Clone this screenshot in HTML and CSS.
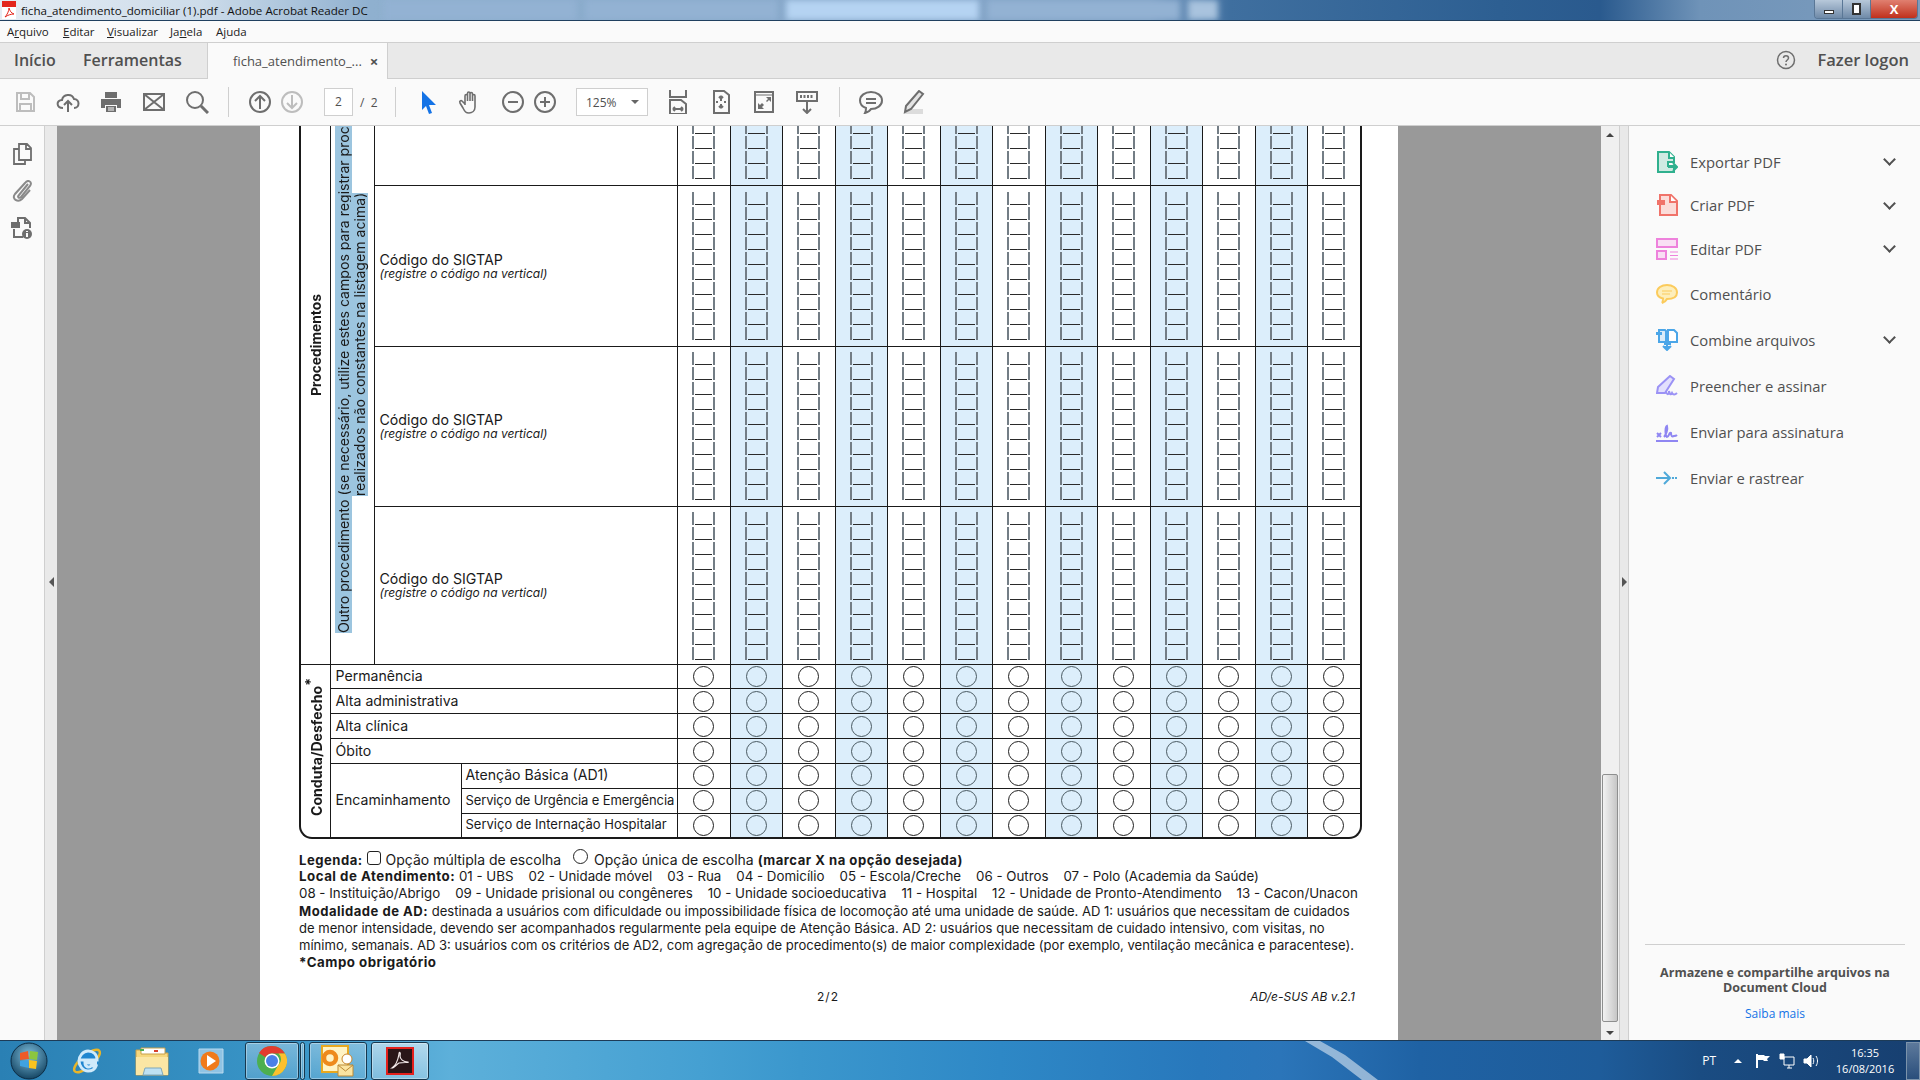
FILE: index.html
```html
<!DOCTYPE html>
<html lang="pt">
<head>
    <meta charset="UTF-8">
    <title>ficha_atendimento_domiciliar (1).pdf - Adobe Acrobat Reader DC</title>
    <link rel="stylesheet" href="styles.css">
</head>
<body>
<!-- Window title -->
<header class="titlebar">
    <svg class="pdf-icon" width="14" height="18" viewBox="0 0 14 18"><path d="M0 0h14v18H0z" fill="#fff"/><path d="M0 0h14v6H0z" fill="#e3261c"/><path d="M3 16c2-2 4-6 4-9 1 3 2 5 5 6-3 0-6 1-9 3z" fill="none" stroke="#e3261c"/></svg>
    <span class="titlebar-text">ficha_atendimento_domiciliar (1).pdf - Adobe Acrobat Reader DC</span>
    <div class="blur-tabs">
        <i class="blur-tab"></i><i class="blur-tab"></i><i class="blur-tab bright"></i><i class="blur-tab"></i><i class="blur-tab small"></i>
    </div>
    <div class="win-buttons">
        <span class="win-btn win-min"><i></i></span>
        <span class="win-btn win-max"><i></i></span>
        <span class="win-btn win-close">X</span>
    </div>
</header>

<nav class="menubar">
    <span>A<u>r</u>quivo</span><span><u>E</u>ditar</span><span><u>V</u>isualizar</span><span>Ja<u>n</u>ela</span><span>A<u>j</u>uda</span>
</nav>

<div class="tabbar">
    <span class="tab-link first">Início</span>
    <span class="tab-link">Ferramentas</span>
    <div class="doc-tab"><span>ficha_atendimento_...</span><b>×</b></div>
    <svg class="help-icon" width="20" height="20" viewBox="0 0 20 20"><circle cx="10" cy="10" r="8.5" fill="none" stroke="#6e6e6e" stroke-width="1.5"/><path d="M7.5 8c0-3 5-3 5 0 0 2-2.500 2-2.500 4" fill="none" stroke="#6e6e6e" stroke-width="1.500"/><circle cx="10" cy="14.500" r="1" fill="#6e6e6e"/></svg>
    <span class="logon">Fazer logon</span>
</div>

<div class="toolbar">
    <div class="tool-group g-file">
        <svg class="ico" viewBox="0 0 24 24" fill="none" stroke="#bdbdbd" stroke-width="2"><path d="M4 3h13l4 4v14H4zM8 3v6h8V3M7 21v-7h11v7"/></svg>
        <svg class="ico" viewBox="0 0 24 24" fill="none" stroke="#6e6e6e" stroke-width="2"><path d="M7 18c-7 0-7-8-1-8 1-6 10-7 12-1 6 0 6 9 0 9M12 22V11M8 15l4-4 4 4"/></svg>
        <svg class="ico" viewBox="0 0 24 24" fill="#6e6e6e"><path d="M6 2h12v6H6zM2 9h20v9h-4v-3H6v3H2zM7 16h10v6H7z"/><path d="M9 18h6M9 20h6" stroke="#fafafa"/></svg>
        <svg class="ico" viewBox="0 0 24 24" fill="none" stroke="#6e6e6e" stroke-width="2"><path d="M2 4h20v16H2zM2 4l20 16M22 4L2 20"/></svg>
        <svg class="ico" viewBox="0 0 24 24" fill="none" stroke="#6e6e6e" stroke-width="2"><circle cx="10" cy="10" r="8"/><path d="M16 16l7 7" stroke-width="3"/></svg>
    </div>
    <i class="tool-sep"></i>
    <div class="tool-group g-nav">
        <svg class="ico" viewBox="0 0 24 24" fill="none" stroke="#6e6e6e" stroke-width="2"><circle cx="12" cy="12" r="10"/><path d="M12 19V6M7 11l5-5 5 5"/></svg>
        <svg class="ico" viewBox="0 0 24 24" fill="none" stroke="#bdbdbd" stroke-width="2"><circle cx="12" cy="12" r="10"/><path d="M12 5v13M7 13l5 5 5-5"/></svg>
    </div>
    <span class="page-input">2</span>
    <span class="page-total">/ &nbsp;2</span>
    <i class="tool-sep sep-b"></i>
    <div class="tool-group g-hand">
        <svg class="ico" viewBox="0 0 24 24" fill="#1473e6"><path d="M6 1l14 14h-7l3 8-3 1-3-8-4 4z"/></svg>
        <svg class="ico" viewBox="0 0 24 24" fill="none" stroke="#6e6e6e" stroke-width="1.600"><path d="M7 15V6c0-2 2.500-2 2.500 0v5M9.500 11V3.500c0-2 2.500-2 2.500 0V11M12 11V4c0-2 2.500-2 2.500 0v7M14.500 11V6c0-2 2.500-2 2.500 0v11c0 4-3 6-6 6s-4-1-6-5l-3-5c-1-2 1-3 2-2l3 3"/></svg>
    </div>
    <div class="tool-group g-zoom">
        <svg class="ico" viewBox="0 0 24 24" fill="none" stroke="#6e6e6e" stroke-width="2"><circle cx="12" cy="12" r="10"/><path d="M7 12h10"/></svg>
        <svg class="ico" viewBox="0 0 24 24" fill="none" stroke="#6e6e6e" stroke-width="2"><circle cx="12" cy="12" r="10"/><path d="M7 12h10M12 7v10"/></svg>
    </div>
    <div class="zoom-select"><span>125%</span><i></i></div>
    <div class="tool-group g-fit">
        <svg class="ico" viewBox="0 0 24 24" fill="none" stroke="#6e6e6e" stroke-width="2"><path d="M4 0v7h16V0M4 10h11l5 4v10H4zM7 19h10M7 19l2-2M7 19l2 2M17 19l-2-2M17 19l-2 2"/></svg>
        <svg class="ico" viewBox="0 0 24 24" fill="none" stroke="#6e6e6e" stroke-width="2"><path d="M5 1h10l5 4v18H5zM12 6v5M12 6l-2 2M12 6l2 2M12 18v-4M12 18l-2-2M12 18l2-2M9 12H7M15 12h2"/></svg>
        <svg class="ico" viewBox="0 0 24 24" fill="none" stroke="#6e6e6e" stroke-width="2"><path d="M3 2h18v20H3z"/><path d="M3 5h18" stroke-width="1"/><path d="M14 7h5v5l-2-2-2 2-1-1 2-2zM6 19v-6l2 2 2-2 2 2-2 2 2 2z" fill="#6e6e6e" stroke="none"/></svg>
        <svg class="ico" viewBox="0 0 24 24" fill="none" stroke="#6e6e6e" stroke-width="2"><path d="M2 2h20v9H2z"/><path d="M5 6.500h14" stroke-width="3" stroke-dasharray="2 1.500"/><path d="M12 12v11M8 19l4 4 4-4"/></svg>
    </div>
    <i class="tool-sep sep-c"></i>
    <div class="tool-group g-note">
        <svg class="ico" viewBox="0 0 24 24" fill="none" stroke="#6e6e6e" stroke-width="2"><path d="M12 2c6 0 11 3.500 11 8.500S18 19 12 19c-1 2-3 3-6 4 1-2 1-3 1-5-4-1.500-6-4-6-7.500C1 5.500 6 2 12 2z"/><path d="M7 9h10M7 13h10"/></svg>
        <svg class="ico" viewBox="0 0 24 24"><path d="M10 19h12v5H2z" fill="#dcdcdc"/><path d="M18 1l4 3-12 15-6 3 1-6z" fill="#e4e4e4" stroke="#6e6e6e" stroke-width="2"/></svg>
    </div>
</div>

<main class="workspace">
    <aside class="rail">
        <svg class="rail-ico" viewBox="0 0 22 22" fill="none" stroke="#6e6e6e" stroke-width="1.800"><path d="M8 1h8l4 4v12H8zM15 1v5h5M8 6H3v15h11v-4"/></svg>
        <svg class="rail-ico" viewBox="0 0 22 22" fill="none" stroke="#8a8a8a" stroke-width="2"><path d="M17 4l-9 11c-2 2 0 4 2 2l9-11c3-4-2-7-5-3L4 14c-4 5 3 9 7 5l8-9"/></svg>
        <svg class="rail-ico" viewBox="0 0 22 22" fill="none" stroke="#6e6e6e" stroke-width="2"><path d="M7 6V1h7l5 5v5M14 1v5h5M3 12v8h9"/><path d="M1 6h7v4H1z" fill="#6e6e6e"/><circle cx="16" cy="17" r="5" fill="#6e6e6e" stroke="none"/><path d="M16 14v1M16 16v4" stroke="#fafafa"/></svg>
    </aside>
    <div class="strip"><i class="arrow-left"></i></div>

    <section class="viewer">
        <article class="page">
            <div class="form-frame">
                <table class="form">
                    <colgroup>
                        <col class="col-a"><col class="col-b"><col class="col-c"><col class="col-d">
                        <col class="wide"><col class="narrow"><col class="wide"><col class="narrow"><col class="wide"><col class="narrow"><col class="wide"><col class="narrow"><col class="wide"><col class="narrow"><col class="wide"><col class="narrow"><col class="wide">
                    </colgroup>
                    <tr class="combs first-combs">
                        <td rowspan="4" class="side"><div class="side-text proc">Procedimentos</div></td>
                        <td rowspan="4" class="side">
                            <div class="side-text outro">
                                <div class="outro-a"><span>Outro procedimento (se necessário, utilize estes campos para registrar procedimentos</span></div>
                                <div class="outro-b"><span>realizados não constantes na listagem acima)</span></div>
                            </div>
                        </td>
                        <td colspan="2">&nbsp;</td>
                        <td></td><td></td><td></td><td></td><td></td><td></td><td></td><td></td><td></td><td></td><td></td><td></td><td></td>
                    </tr>
                    <tr class="combs second-combs">
                        <td colspan="2" class="sigtap"><p>Código do SIGTAP</p><em>(registre o código na vertical)</em></td>
                        <td></td><td></td><td></td><td></td><td></td><td></td><td></td><td></td><td></td><td></td><td></td><td></td><td></td>
                    </tr>
                    <tr class="combs third-combs">
                        <td colspan="2" class="sigtap"><p>Código do SIGTAP</p><em>(registre o código na vertical)</em></td>
                        <td></td><td></td><td></td><td></td><td></td><td></td><td></td><td></td><td></td><td></td><td></td><td></td><td></td>
                    </tr>
                    <tr class="combs fourth-combs">
                        <td colspan="2" class="sigtap"><p>Código do SIGTAP</p><em>(registre o código na vertical)</em></td>
                        <td></td><td></td><td></td><td></td><td></td><td></td><td></td><td></td><td></td><td></td><td></td><td></td><td></td>
                    </tr>
                    <tr class="radios short">
                        <td rowspan="7" class="side end"><div class="side-text conduta">Conduta/Desfecho<sup>*</sup></div></td>
                        <td colspan="3" class="label">Permanência</td>
                        <td></td><td></td><td></td><td></td><td></td><td></td><td></td><td></td><td></td><td></td><td></td><td></td><td></td>
                    </tr>
                    <tr class="radios">
                        <td colspan="3" class="label">Alta administrativa</td>
                        <td></td><td></td><td></td><td></td><td></td><td></td><td></td><td></td><td></td><td></td><td></td><td></td><td></td>
                    </tr>
                    <tr class="radios">
                        <td colspan="3" class="label">Alta clínica</td>
                        <td></td><td></td><td></td><td></td><td></td><td></td><td></td><td></td><td></td><td></td><td></td><td></td><td></td>
                    </tr>
                    <tr class="radios">
                        <td colspan="3" class="label">Óbito</td>
                        <td></td><td></td><td></td><td></td><td></td><td></td><td></td><td></td><td></td><td></td><td></td><td></td><td></td>
                    </tr>
                    <tr class="radios short">
                        <td colspan="2" rowspan="3" class="label end">Encaminhamento</td>
                        <td class="label sub">Atenção Básica (AD1)</td>
                        <td></td><td></td><td></td><td></td><td></td><td></td><td></td><td></td><td></td><td></td><td></td><td></td><td></td>
                    </tr>
                    <tr class="radios">
                        <td class="label sub tight">Serviço de Urgência e Emergência</td>
                        <td></td><td></td><td></td><td></td><td></td><td></td><td></td><td></td><td></td><td></td><td></td><td></td><td></td>
                    </tr>
                    <tr class="radios short">
                        <td class="label sub small">Serviço de Internação Hospitalar</td>
                        <td></td><td></td><td></td><td></td><td></td><td></td><td></td><td></td><td></td><td></td><td></td><td></td><td></td>
                    </tr>
                </table>
            </div>

            <div class="legend">
                <p class="lead"><b>Legenda:</b> <i class="box"></i> Opção múltipla de escolha <i class="ring"></i> Opção única de escolha <b>(marcar X na opção desejada)</b></p>
                <p><b>Local de Atendimento:</b> 01 - UBS    02 - Unidade móvel    03 - Rua    04 - Domicílio    05 - Escola/Creche    06 - Outros    07 - Polo (Academia da Saúde)</p>
                <p>08 - Instituição/Abrigo    09 - Unidade prisional ou congêneres    10 - Unidade socioeducativa    11 - Hospital    12 - Unidade de Pronto-Atendimento    13 - Cacon/Unacon</p>
                <p class="prose"><b>Modalidade de AD:</b> destinada a usuários com dificuldade ou impossibilidade física de locomoção até uma unidade de saúde. AD 1: usuários que necessitam de cuidados</p>
                <p class="prose">de menor intensidade, devendo ser acompanhados regularmente pela equipe de Atenção Básica. AD 2: usuários que necessitam de cuidado intensivo, com visitas, no</p>
                <p class="prose">mínimo, semanais. AD 3: usuários com os critérios de AD2, com agregação de procedimento(s) de maior complexidade (por exemplo, ventilação mecânica e paracentese).</p>
                <p><b>*Campo obrigatório</b></p>
            </div>
            <div class="page-foot"><span class="page-no">2/2</span><em>AD/e-SUS AB v.2.1</em></div>
        </article>
    </section>

    <div class="scrollbar">
        <i class="sb-up"></i>
        <div class="sb-track"><div class="sb-thumb"></div></div>
        <i class="sb-down"></i>
    </div>
    <div class="strip strip-right"><i class="arrow-right"></i></div>

    <!-- Tools panel -->
    <aside class="panel">
        <ul class="tools">
            <li><svg class="tool-ico" viewBox="0 0 22 22"><path d="M2 1h11l5 5v5h-6v4h6v6H2z" fill="#cfeae2" stroke="#2fb08e" stroke-width="2"/><path d="M13 1v6h6" fill="#fff" stroke="#2fb08e" stroke-width="2"/><path d="M12 16h8M17 12l4 4-4 4" fill="none" stroke="#2fb08e" stroke-width="2"/></svg><span>Exportar PDF</span><i class="chev"></i></li>
            <li><svg class="tool-ico" viewBox="0 0 22 22"><path d="M4 1h11l6 6v14H4z" fill="#fbdcd9" stroke="#f0736a" stroke-width="2"/><path d="M14 1v7h7" fill="#fff" stroke="#f0736a" stroke-width="2"/><path d="M1 6h8v5H1z" fill="#f0736a"/></svg><span>Criar PDF</span><i class="chev"></i></li>
            <li><svg class="tool-ico" viewBox="0 0 22 22" stroke="#ee82dc" stroke-width="2"><path d="M1 1h20v8H1z" fill="#f9dff4"/><path d="M1 13h9v8H1z" fill="#f9dff4"/><path d="M14 14h8M14 17.500h8M14 21h8" stroke-width="1.200"/></svg><span>Editar PDF</span><i class="chev"></i></li>
            <li><svg class="tool-ico" viewBox="0 0 22 22"><path d="M11 2c5.500 0 10 3 10 7.500S16.500 16 11 16c-1 2-2 3-5 4 1-1 1-3 1-4.500C3 14.500 1 12 1 9.500 1 5 5.500 2 11 2z" fill="#fdeebb" stroke="#fbcb5c" stroke-width="2"/><path d="M6 8h10M6 11h8" stroke="#fbcb5c"/></svg><span>Comentário</span></li>
            <li><svg class="tool-ico" viewBox="0 0 22 22"><path d="M3 1h6l1 1v11H3z" fill="#d8ebf9" stroke="#4ba6e8" stroke-width="2"/><path d="M12 1h6l3 3v9h-9z" fill="#fff" stroke="#4ba6e8" stroke-width="2"/><path d="M0 3h6v3H0z" fill="#4ba6e8"/><path d="M8 15h6v-3M11 13v8M7 17l4 4 4-4" fill="#4ba6e8" stroke="#4ba6e8" stroke-width="2"/></svg><span>Combine arquivos</span><i class="chev"></i></li>
            <li><svg class="tool-ico" viewBox="0 0 22 22" fill="none" stroke="#9b92f5" stroke-width="2"><path d="M14 1l4 3-9 14H1l1-6z" fill="#e3e0fd"/><path d="M10 17c1 3 3 3 3-1 1 4 2 4 3 2 1 2 3 2 5 0"/></svg><span>Preencher e assinar</span></li>
            <li><svg class="tool-ico" viewBox="0 0 22 22" fill="none" stroke="#8f86f2" stroke-width="2"><path d="M1 12l4 4M5 12l-4 4M8 16c2-2 4-8 3-11-2 1-2 9 0 11 2 0 2-5 4-4 0 3 1 4 3 3 1 0 2 0 3-1"/><path d="M0 20h22"/></svg><span>Enviar para assinatura</span></li>
            <li><svg class="tool-ico" viewBox="0 0 22 22" fill="none" stroke="#4fa9d9" stroke-width="2"><path d="M0 11h13M8 5l6 6-6 6"/><path d="M16 11h6" stroke-dasharray="2 1"/></svg><span>Enviar e rastrear</span></li>
        </ul>
        <div class="cloud">
            <h4>Armazene e compartilhe arquivos na Document Cloud</h4>
            <a href="#">Saiba mais</a>
        </div>
    </aside>
</main>

<footer class="taskbar">
    <div class="task orb">
        <svg width="38" height="38" viewBox="0 0 38 38"><defs><radialGradient id="orb" cx=".5" cy=".35" r=".7"><stop offset="0" stop-color="#7fc0df"/><stop offset="1" stop-color="#0d3c5a"/></radialGradient></defs><circle cx="19" cy="19" r="18" fill="url(#orb)" stroke="#0c2c44"/><path d="M10 11l8-2 1 8-9 1z" fill="#ef5a28"/><path d="M20 9l8 1-1 8-8-1z" fill="#8cc63f"/><path d="M10 19l8-1 1 8-9-2z" fill="#3fa2e0"/><path d="M19 18l8 1-1 8-7-1z" fill="#fcc31e"/></svg>
    </div>
    <div class="task pin">
        <svg width="34" height="34" viewBox="0 0 34 34"><ellipse cx="16" cy="17" rx="16" ry="6" transform="rotate(-40 16 17)" fill="none" stroke="#e9b528" stroke-width="2.500"/><circle cx="17" cy="17" r="10.500" fill="#1f86d0"/><path d="M8 16h18c0-6-4-9-9-9s-9 5-9 10 4 10 9 10c4 0 7-2 8-5h-5c-2 2-6 1-6-3h12" fill="none" stroke="#cfeafa" stroke-width="3"/></svg>
    </div>
    <div class="task pin">
        <svg width="34" height="30" viewBox="0 0 34 30"><path d="M1 4h12l2 3h18v22H1z" fill="#f6d77e" stroke="#c7a04a"/><path d="M6 2h24v6H6z" fill="#fff" stroke="#c7a04a"/><path d="M5 3h4v2H5z" fill="#4cae4f"/><path d="M19 4h4v2h-4z" fill="#d8402e"/><path d="M1 11h32v18H1z" fill="#fbe6a4"/><path d="M10 22h16l2 7H8z" fill="#bfe1f2" stroke="#7fa8bb"/></svg>
    </div>
    <div class="task pin">
        <svg width="30" height="28" viewBox="0 0 30 28"><path d="M2 2h24v24H2z" fill="#8fc3e4" stroke="#b9daef"/><circle cx="13" cy="14" r="9.500" fill="#f07a1b"/><path d="M10 8l9 6-9 6z" fill="#fff"/></svg>
    </div>
    <div class="task open chrome">
        <svg width="30" height="30" viewBox="0 0 30 30"><circle cx="15" cy="15" r="15" fill="#4caf50"/><path d="M15 0a15 15 0 0 1 13 7.500H15a7.500 7.500 0 0 0-6.500 3.750L2 7a15 15 0 0 1 13-7z" fill="#e33b2e"/><path d="M28 7.500A15 15 0 0 1 15 30l6.500-11.250a7.500 7.500 0 0 0 0-11.250z" fill="#fbc02d"/><circle cx="15" cy="15" r="7.500" fill="#fff"/><circle cx="15" cy="15" r="6" fill="#4a80e8"/></svg>
    </div>
    <div class="task open sliver"></div>
    <div class="task open">
        <svg width="34" height="32" viewBox="0 0 34 32"><path d="M1 1h26v26H1z" fill="#fff3c4" stroke="#e8a81f" stroke-width="2"/><circle cx="9" cy="13" r="6" fill="none" stroke="#ee8a1c" stroke-width="4.500"/><circle cx="26" cy="14" r="5" fill="#fff" stroke="#c9862a"/><path d="M17 20h15v11H17z" fill="#fbe4a0" stroke="#bb8a36"/><path d="M17 20l7.500 6 7.500-6" fill="none" stroke="#bb8a36"/></svg>
    </div>
    <div class="task open active">
        <svg width="28" height="28" viewBox="0 0 28 28"><path d="M1 1h26v26H1z" fill="#2a1618" stroke="#e4201c" stroke-width="2"/><path d="M6 21c3-2 6-8 7-14 0-3 2-2 1 2 0 3 3 6 8 6 2 1-6 0-9 1-2 1-5 5-7 5z" fill="none" stroke="#f3e9e9" stroke-width="1.200"/></svg>
    </div>
    <div class="tray">
        <span class="lang">PT</span>
        <i class="tray-up"></i>
        <svg width="16" height="16" viewBox="0 0 16 16"><path d="M2 1v14" stroke="#fff" stroke-width="2"/><path d="M3 2h6l1 1h5l-3 3 1 2H9L8 7H3z" fill="#fff"/></svg>
        <svg width="16" height="16" viewBox="0 0 16 16" fill="none" stroke="#fff"><path d="M5 4h10v8H5zM8 15h5M10 12v3"/><path d="M1 1h4v5H1z" fill="#fff"/></svg>
        <svg width="16" height="16" viewBox="0 0 16 16" fill="none" stroke="#fff"><path d="M1 6h3l4-4v12l-4-4H1z" fill="#fff"/><path d="M10 5c1 2 1 4 0 6M13 3c2 3 2 7 0 10"/></svg>
        <div class="clock"><span>16:35</span><span>16/08/2016</span></div>
        <i class="show-desktop"></i>
    </div>
</footer>
</body>
</html>
```

FILE: styles.css
```css
* {
    box-sizing: border-box;
}

html, body {
    margin: 0;
    height: 100%;
    overflow: hidden;
}

body {
    width: 1920px;
    height: 1080px;
    display: flex;
    flex-direction: column;
    background-color: #fafafa;
    font-family: "Open Sans", sans-serif;
    color: #505050;
}

/* title bar */
.titlebar {
    height: 21px;
    flex: none;
    display: flex;
    align-items: center;
    border-bottom: 1px solid #20405f;
    overflow: hidden;
    background: linear-gradient(to right, #e4ecf3 0, #cddcea 200px, #8fb0cf 370px, #7d9fc3 1150px, #3f6f9f 1230px, #2d5f92 1500px, #2a5a8e 1600px, #6f93b8 1700px, #7d9dbe 1920px);
}

.pdf-icon {
    margin-left: 2px;
    flex: none;
}

.titlebar-text {
    margin-left: 5px;
    width: 349px;
    flex: none;
    font-size: 11.6px;
    color: #111;
    white-space: nowrap;
}

.blur-tabs {
    display: flex;
    gap: 8px;
    height: 20px;
    margin-left: 14px;
    filter: blur(3px);
}

.blur-tab {
    width: 193px;
    background-color: #93b2d3;
}

.blur-tab.bright {
    background-color: #b5d3f2;
}

.blur-tab.small {
    width: 30px;
    background-color: #a9c3de;
}

.win-buttons {
    margin-left: auto;
    margin-right: 2px;
    height: 19px;
    align-self: flex-start;
    display: flex;
    border: 1px solid #5a7796;
    border-top: 0;
    border-radius: 0 0 4px 4px;
    overflow: hidden;
}

.win-btn {
    width: 28px;
    display: flex;
    align-items: center;
    justify-content: center;
    background: linear-gradient(#b7c8da, #6f8aa8);
    border-right: 1px solid #5a7796;
}

.win-min i {
    width: 10px;
    height: 4px;
    margin-top: 6px;
    background-color: #fff;
    border: 1px solid #333;
}

.win-max i {
    width: 9px;
    height: 12px;
    background-color: #fff;
    border: 2px solid #333;
}

.win-close {
    width: 46px;
    border-right: 0;
    background: linear-gradient(#e08070, #c0301c);
    color: #fff;
    font-size: 13px;
    font-weight: 700;
}

/* menu */
.menubar {
    height: 22px;
    flex: none;
    display: flex;
    align-items: center;
    padding-left: 7px;
    border-bottom: 1px solid #cfcfcf;
    font-size: 11.5px;
    color: #222;
}

.menubar span:nth-child(1) {
    width: 56px;
}

.menubar span:nth-child(2) {
    width: 44px;
}

.menubar span:nth-child(3) {
    width: 63px;
}

.menubar span:nth-child(4) {
    width: 46px;
}

/* tabs */
.tabbar {
    height: 36px;
    flex: none;
    display: flex;
    align-items: center;
    padding-right: 11px;
    background-color: #e9e9e9;
    border-bottom: 1px solid #cfcfcf;
}

.tab-link {
    margin-top: -2px;
    font-size: 16px;
    font-weight: 600;
    color: #505050;
}

.tab-link.first {
    margin-left: 14px;
    width: 69px;
}

.tab-link:nth-child(2) {
    width: 124px;
}

.doc-tab {
    width: 181px;
    height: 36px;
    margin-bottom: -1px;
    padding-left: 25px;
    display: flex;
    align-items: center;
    gap: 8px;
    background-color: #fafafa;
    border-left: 1px solid #cfcfcf;
    border-right: 1px solid #cfcfcf;
    font-size: 13px;
    white-space: nowrap;
}

.doc-tab b {
    font-size: 15px;
}

.help-icon {
    margin-left: auto;
    margin-top: -2px;
}

.logon {
    margin-left: 21px;
    margin-top: -2px;
    font-size: 16.5px;
    font-weight: 600;
}

/* toolbar */
.toolbar {
    height: 47px;
    flex: none;
    display: flex;
    align-items: center;
    padding-left: 13px;
    border-bottom: 1px solid #cfcfcf;
}

.tool-group {
    display: flex;
}

.ico {
    width: 24px;
    height: 24px;
    flex: none;
}

.g-file {
    gap: 19px;
}

.tool-sep {
    width: 1px;
    height: 30px;
    margin-left: 19px;
    background-color: #cfcfcf;
}

.g-nav {
    margin-left: 19px;
    gap: 8px;
}

.page-input {
    width: 29px;
    height: 28px;
    margin-left: 20px;
    border: 1px solid #cfcfcf;
    background-color: #fff;
    text-align: center;
    font-size: 12px;
    line-height: 26px;
}

.page-total {
    margin-left: 7px;
    width: 26px;
    font-size: 12px;
}

.sep-b {
    margin-left: 9px;
}

.g-hand {
    margin-left: 20px;
    gap: 18px;
}

.g-zoom {
    margin-left: 19px;
    gap: 8px;
}

.zoom-select {
    width: 72px;
    height: 28px;
    margin-left: 19px;
    padding: 0 8px 0 9px;
    display: flex;
    align-items: center;
    justify-content: space-between;
    border: 1px solid #cfcfcf;
    background-color: #fff;
    font-size: 12px;
}

.zoom-select i {
    border: 4px solid transparent;
    border-top-color: #666;
    border-bottom: 0;
}

.g-fit {
    margin-left: 18px;
    gap: 19px;
}

.sep-c {
    margin-left: 20px;
}

.g-note {
    margin-left: 19px;
    gap: 18px;
}

/* workspace */
.workspace {
    flex: 1;
    min-height: 0;
    display: flex;
}

.rail {
    width: 45px;
    flex: none;
    padding-top: 17px;
    display: flex;
    flex-direction: column;
    align-items: center;
    gap: 15px;
    border-right: 1px solid #cfcfcf;
}

.rail-ico {
    width: 22px;
    height: 22px;
    margin-left: -1px;
}

.strip {
    width: 12px;
    flex: none;
    display: flex;
    align-items: center;
    justify-content: center;
    background-color: #e9e9e9;
}

.arrow-left {
    border: 5px solid transparent;
    border-right-color: #555;
    border-left: 0;
    margin-top: -2px;
}

.arrow-right {
    border: 5px solid transparent;
    border-left-color: #555;
    border-right: 0;
    margin-top: -2px;
}

.strip-right {
    width: 10px;
    border-left: 1px solid #cfcfcf;
    border-right: 1px solid #cfcfcf;
}

.viewer {
    width: 1544px;
    flex: none;
    overflow: hidden;
    background-color: #999;
}

.page {
    width: 1138px;
    height: 100%;
    margin-left: 203px;
    padding-left: 39px;
    background-color: #fff;
    color: #1a1a1a;
    font-family: Inter, "Liberation Sans", sans-serif;
}

/* form table */
.form-frame {
    width: 1063px;
    border: 2px solid #1a1a1a;
    border-top: 0;
    border-radius: 0 0 13px 13px;
    overflow: hidden;
}

.form {
    border-collapse: collapse;
    table-layout: fixed;
    width: 1059px;
}

.form td {
    padding: 0;
    border: 1px solid #1a1a1a;
}

.form tr:first-child td {
    border-top: 0;
}

.form tr:last-child td,
.form td.end {
    border-bottom: 0;
}

.form td:first-child {
    border-left: 0;
}

.form td:last-child {
    border-right: 0;
}

.col-a {
    width: 29px;
}

.col-b {
    width: 44px;
}

.col-c {
    width: 87px;
}

.col-d {
    width: 216px;
}

.wide {
    width: 53px;
}

.narrow {
    width: 52px;
}

.form td:empty:nth-last-child(even) {
    background-color: #dceefb;
}

/* one column of comb boxes, drawn with gradients at the 15px pitch */
.combs td:empty::before {
    content: "";
    display: block;
    width: 23px;
    height: 150px;
    margin: var(--comb-top) auto 0;
    background-image:
        linear-gradient(#737d85 13px, transparent 13px),
        linear-gradient(#737d85 13px, transparent 13px),
        linear-gradient(transparent 12px, #2a2a2a 12px, #2a2a2a 13px, transparent 13px);
    background-size: 2px 15px, 2px 15px, 17px 15px;
    background-position: 0 0, 21px 0, 3px 0;
    background-repeat: repeat-y;
}

.combs td {
    vertical-align: top;
    overflow: hidden;
}

.first-combs td {
    height: 59px;
}

.first-combs {
    --comb-top: -95px;
}

.second-combs td {
    height: 161px;
}

.second-combs {
    --comb-top: 6px;
}

.third-combs td {
    height: 160px;
}

.third-combs {
    --comb-top: 5px;
}

.fourth-combs td {
    height: 158px;
}

.fourth-combs {
    --comb-top: 5px;
}

.form td.sigtap {
    vertical-align: middle;
    padding-left: 5px;
    font-size: 14.2px;
}

.sigtap p {
    margin: 0;
    line-height: 15px;
}

.sigtap em {
    display: block;
    font-size: 12px;
    line-height: 13px;
}

.radios td {
    height: 25px;
    font-size: 14.1px;
}

.radios.short td {
    height: 24px;
}

.radios td:empty::before {
    content: "";
    display: block;
    width: 19px;
    height: 19px;
    margin: 0 auto;
    border: 1px solid #1f1f1f;
    border-radius: 50%;
}

.radios td:empty:nth-last-child(even)::before {
    border-color: #4a5a62;
}

.form td.label {
    padding: 0 0 2px 5px;
    white-space: nowrap;
}

.form td.sub {
    padding-left: 4px;
}

.form td.tight {
    font-size: 13px;
    letter-spacing: -0.12px;
}

.form td.small {
    font-size: 13px;
}

.side-text {
    writing-mode: vertical-rl;
    transform: rotate(180deg);
    overflow: hidden;
    white-space: nowrap;
}

.proc {
    height: 538px;
    padding-top: 268px;
    padding-right: 7px;
    font-size: 13.8px;
    font-weight: 700;
}

.outro {
    height: 538px;
    padding: 0 5px 0 7px;
    font-size: 14.1px;
    line-height: 16px;
}

.outro span {
    background-color: #9cc5df;
}

.outro-a {
    padding-top: 31px;
}

.outro-b {
    padding-top: 168px;
}

.conduta {
    height: 172px;
    padding-top: 21px;
    padding-right: 7px;
    font-size: 14.1px;
    font-weight: 700;
}

.conduta sup {
    font-size: 14px;
    line-height: 0;
}

/* legend below the form */
.legend {
    margin-top: 12px;
    font-size: 13.3px;
}

.legend p {
    margin: 0;
    height: 17.2px;
    line-height: 17.2px;
    white-space: pre;
}

.legend b {
    letter-spacing: 0.5px;
}

.legend .lead {
    font-size: 14px;
}

.lead b {
    font-size: 13.1px;
}

.legend .prose {
    font-size: 13.05px;
}

.box {
    display: inline-block;
    width: 14px;
    height: 14px;
    margin-right: 1px;
    vertical-align: -2px;
    border: 1.5px solid #222;
    border-radius: 3px;
    transform: translateY(-2px);
}

.ring {
    display: inline-block;
    width: 15px;
    height: 15px;
    margin: 0 2px 0 8px;
    vertical-align: -2px;
    border: 1.5px solid #222;
    border-radius: 50%;
    transform: translateY(-3px);
}

.page-foot {
    width: 1056px;
    margin-top: 18px;
    display: flex;
    justify-content: space-between;
    font-size: 12px;
}

.page-no {
    margin-left: 518px;
    letter-spacing: 1px;
}

/* scrollbar */
.scrollbar {
    width: 18px;
    flex: none;
    display: flex;
    flex-direction: column;
    align-items: center;
    background-color: #f0f0f0;
}

.sb-up {
    margin-top: 7px;
    border: 4px solid transparent;
    border-bottom-color: #444;
    border-top: 0;
}

.sb-track {
    flex: 1;
    width: 100%;
    padding-top: 637px;
}

.sb-thumb {
    width: 16px;
    height: 248px;
    margin: 0 auto;
    border: 1px solid #8e8f8f;
    border-radius: 2px;
    background: linear-gradient(to right, #f2f2f2, #d8d8d8 60%, #c6c6c6);
}

.sb-down {
    margin-bottom: 5px;
    border: 4px solid transparent;
    border-top-color: #444;
    border-bottom: 0;
}

/* tools panel */
.panel {
    flex: 1;
    display: flex;
    flex-direction: column;
}

.tools {
    list-style: none;
    margin: 0;
    padding: 14px 0 0 27px;
}

.tools li {
    height: 46px;
    display: flex;
    align-items: center;
    font-size: 14.8px;
}

.tools li:nth-child(-n+3) {
    height: 43.5px;
}

.tool-ico {
    width: 22px;
    height: 22px;
    margin-right: 12px;
    flex: none;
}

.chev {
    width: 9px;
    height: 9px;
    margin-left: auto;
    margin-right: 26px;
    margin-top: -4px;
    border-right: 2px solid #505050;
    border-bottom: 2px solid #505050;
    transform: rotate(45deg);
}

.cloud {
    margin: auto 15px 0 16px;
    padding-top: 20px;
    height: 96px;
    border-top: 1px solid #cfcfcf;
    text-align: center;
}

.cloud h4 {
    margin: 0 12px 10px;
    font-size: 12.5px;
    font-weight: 700;
    line-height: 15px;
}

.cloud a {
    display: block;
    font-size: 12px;
    color: #1473e6;
    text-decoration: none;
}

/* taskbar */
.taskbar {
    height: 40px;
    flex: none;
    position: relative;
    display: flex;
    align-items: center;
    border-top: 1px solid #1d3b57;
    background: linear-gradient(to right, #2a80b4 0, #3a96c8 300px, #5db0da 450px, #45a0d2 700px, #3b97cd 800px, #2e88c6 1000px, #2878bc 1200px, #2b75b9 1280px, #1f62a4 1420px, #1e5c9a 1600px, #1a4c82 1700px, #173f70 1920px);
    color: #fff;
}

/* the light streak of the Windows wallpaper */
.taskbar::after {
    content: "";
    position: absolute;
    left: 1300px;
    top: 0;
    width: 80px;
    height: 39px;
    clip-path: polygon(5px 0, 20px 0, 45px 14px, 78px 100%, 62px 100%, 32px 16px);
    background-color: rgba(255, 255, 255, 0.5);
    pointer-events: none;
}

.task {
    height: 38px;
    flex: none;
    display: flex;
    align-items: center;
    justify-content: center;
}

.orb {
    width: 58px;
}

.pin {
    width: 60px;
}

.pin:nth-child(3) {
    margin-left: 4px;
}

.open {
    width: 58px;
    margin-left: 4px;
    border: 1px solid #16384f;
    border-radius: 3px;
    background: linear-gradient(rgba(255, 255, 255, 0.32), rgba(255, 255, 255, 0.12));
    box-shadow: inset 0 0 0 1px rgba(255, 255, 255, 0.35);
}

.chrome {
    width: 54px;
    margin-left: 3px;
}

.sliver {
    width: 5px;
    margin-left: 1px;
}

.active {
    background: linear-gradient(rgba(255, 255, 255, 0.55), rgba(255, 255, 255, 0.28));
}

.tray {
    margin-left: auto;
    display: flex;
    align-items: center;
    gap: 8px;
    font-size: 12px;
}

.lang {
    margin-right: 10px;
}

.tray-up {
    border: 4px solid transparent;
    border-bottom-color: #fff;
    border-top: 0;
    margin-right: 5px;
}

.clock {
    width: 70px;
    margin-left: 3px;
    display: flex;
    flex-direction: column;
    align-items: center;
    line-height: 16px;
    font-size: 11px;
}

.show-desktop {
    width: 14px;
    height: 38px;
    margin-left: -2px;
    border: 1px solid #7b93ab;
    background: linear-gradient(rgba(255, 255, 255, 0.3), rgba(255, 255, 255, 0.08));
}
```
